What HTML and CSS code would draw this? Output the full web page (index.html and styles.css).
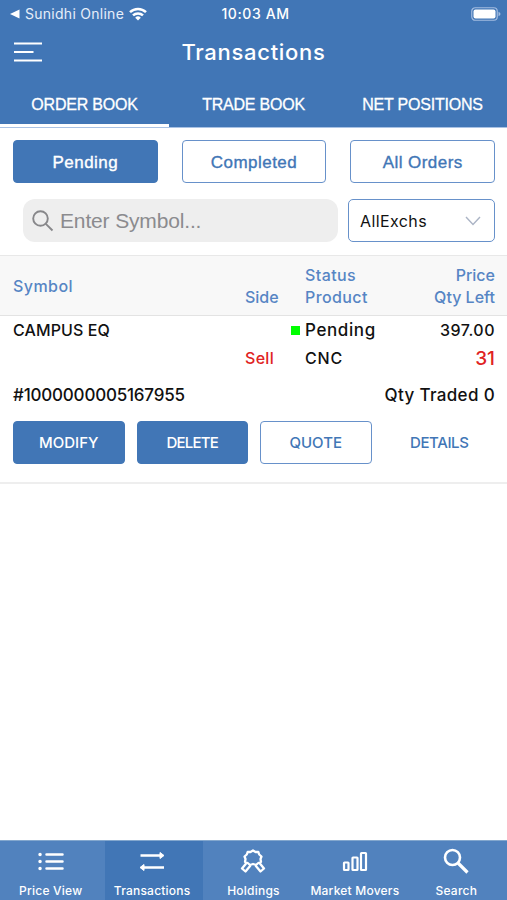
FILE: index.html
```html
<!DOCTYPE html>
<html lang="en">
<head>
    <meta charset="UTF-8">
    <title>Transactions</title>
    <link rel="stylesheet" href="styles.css">
</head>
<body>
    <div class="app">
        <header class="top">
            <div class="status-bar">
                <div class="status-left">
                    <svg width="10" height="10" viewBox="0 0 10 10"><path d="M0 5L9.500 .5V9.500Z" fill="#fff"/></svg>
                    <span class="back-app">Sunidhi Online</span>
                    <svg width="18" height="14" viewBox="0 0 18 14" fill="none" stroke="#fff" stroke-width="2.500">
                        <path d="M1 5.200A11.500 11.500 0 0 1 17 5.200M4 8.400A7.200 7.200 0 0 1 14 8.400"/>
                        <path d="M9 13.500L6.200 10.700A4 4 0 0 1 11.800 10.700Z" fill="#fff" stroke="none"/>
                    </svg>
                </div>
                <span class="clock">10:03 AM</span>
                <svg class="battery" width="30" height="14" viewBox="0 0 30 14">
                    <rect x=".75" y=".75" width="25.500" height="12.500" rx="3.500" fill="none" stroke="#a3bce0" stroke-width="1.200"/>
                    <rect x="2.500" y="2.500" width="22" height="9" rx="2" fill="#fff"/>
                    <path d="M27.500 4.800Q29.500 5.500 29.500 7T27.500 9.200Z" fill="#a3bce0"/>
                </svg>
            </div>
            <div class="title-bar">
                <svg width="28" height="20" viewBox="0 0 28 20" stroke="#fff" stroke-width="2"><path d="M0 1.500H28M0 10H19.500M0 18.500H28"/></svg>
                <h1>Transactions</h1>
            </div>
            <nav class="tabs">
                <a class="tab selected">ORDER BOOK</a>
                <a class="tab">TRADE BOOK</a>
                <a class="tab">NET POSITIONS</a>
            </nav>
        </header>

        <section class="filters">
            <div class="filter-row">
                <button class="btn filled">Pending</button>
                <button class="btn">Completed</button>
                <button class="btn">All Orders</button>
            </div>
            <div class="search-row">
                <div class="search-box">
                    <svg width="22" height="22" viewBox="0 0 22 22" fill="none" stroke="#87878a" stroke-width="1.900"><circle cx="8.500" cy="8.500" r="7.300"/><path d="M13.800 13.800L20.500 20.500"/></svg>
                    <span>Enter Symbol...</span>
                </div>
                <div class="exchange">
                    <span>AllExchs</span>
                    <svg width="16" height="10" viewBox="0 0 16 10" fill="none" stroke="#abb4c5" stroke-width="1.400"><path d="M1 1L8 8.500L15 1"/></svg>
                </div>
            </div>
        </section>

        <div class="list-head">
            <span class="head-symbol">Symbol</span>
            <span class="head-side">Side</span>
            <div class="head-status"><div>Status</div><div>Product</div></div>
            <div class="head-price"><div>Price</div><div>Qty Left</div></div>
        </div>

        <section class="order">
            <div class="order-row">
                <span class="symbol">CAMPUS EQ</span>
                <i class="dot"></i>
                <span class="state">Pending</span>
                <span class="price">397.00</span>
            </div>
            <div class="order-row">
                <span class="side">Sell</span>
                <span class="product">CNC</span>
                <span class="qty">31</span>
            </div>
            <div class="order-info">
                <span class="order-id">#1000000005167955</span>
                <span class="traded">Qty Traded 0</span>
            </div>
            <div class="actions">
                <button class="btn filled">MODIFY</button>
                <button class="btn filled delete">DELETE</button>
                <button class="btn">QUOTE</button>
                <button class="btn plain">DETAILS</button>
            </div>
        </section>

        <nav class="bottom-nav">
            <a class="nav-item">
                <svg width="28" height="26" viewBox="0 0 28 26" fill="none" stroke="#fff" stroke-width="2.500" stroke-linecap="round"><path d="M9.500 6.500H25.500M9.500 13.500H25.500M9.500 20.500H25.500"/><path d="M3 6.500H3.100M3 13.500H3.100M3 20.500H3.100" stroke-width="3.400"/></svg>
                <span>Price View</span>
            </a>
            <a class="nav-item current">
                <svg width="28" height="26" viewBox="0 0 28 26" fill="#fff" stroke="#fff"><path d="M2.500 7.500H22M26 19.500H6" fill="none" stroke-width="2.400"/><path d="M22 4.500L26 7.500L22 10.500ZM6 16.500L2 19.500L6 22.500Z"/></svg>
                <span>Transactions</span>
            </a>
            <a class="nav-item">
                <svg width="28" height="26" viewBox="0 0 28 26" fill="none" stroke="#fff" stroke-width="2.300" stroke-linejoin="round"><path d="M14 2.500L16.500 4L19.300 3.800L20.200 6.500L22.500 8.500L21.500 11L22 14L19.300 15L17 17L14 16L11 17L8.700 15L6 14L6.500 11L5.500 8.500L7.800 6.500L8.700 3.800L11.500 4Z"/><path d="M7.500 15L3 20.500L6.500 23.500L11.500 17.500M20.500 15L25 20.500L21.500 23.500L16.500 17.500"/></svg>
                <span>Holdings</span>
            </a>
            <a class="nav-item">
                <svg width="28" height="26" viewBox="0 0 28 26" fill="none" stroke="#fff" stroke-width="2.200"><rect x="3" y="14.500" width="4.500" height="7.500" rx=".5"/><rect x="11.500" y="9.500" width="5" height="12.500" rx=".5"/><rect x="20" y="5" width="5" height="17" rx=".5"/></svg>
                <span>Market Movers</span>
            </a>
            <a class="nav-item">
                <svg width="28" height="26" viewBox="0 0 28 26" fill="none" stroke="#fff" stroke-width="2.600"><circle cx="10.500" cy="9.500" r="7.500"/><path d="M15.500 14.500L25.500 24.500" stroke-width="3.200"/></svg>
                <span>Search</span>
            </a>
        </nav>
    </div>
</body>
</html>
```

FILE: styles.css
```css
* {
    box-sizing: border-box;
}

body {
    margin: 0;
    font-family: Inter, "Liberation Sans", sans-serif;
    background-color: #fff;
    color: #111;
}

.app {
    display: flex;
    flex-direction: column;
    height: 900px;
    width: 507px;
}

svg {
    display: block;
    flex: none;
}

.top {
    height: 128px;
    background-color: #4176b6;
    border-bottom: 1px solid #a9c2e4;
    color: #fff;
}

.status-bar {
    display: grid;
    grid-template-columns: 1fr auto 1fr;
    align-items: center;
    height: 27px;
    padding: 0 6px 0 10px;
}

.status-left {
    display: flex;
    align-items: center;
}

.back-app {
    margin: 0 5px 0 5px;
    font-size: 14px;
    letter-spacing: 0.27px;
    color: #e6eefa;
    white-space: nowrap;
}

.clock {
    font-size: 14px;
    font-weight: 500;
    letter-spacing: 0.6px;
}

.battery {
    justify-self: end;
}

.title-bar {
    display: grid;
    grid-template-columns: 1fr auto 1fr;
    align-items: center;
    height: 50px;
    padding: 0 14px;
}

h1 {
    margin: 0;
    font-size: 22px;
    font-weight: 500;
    letter-spacing: 0.7px;
}

.tabs {
    display: grid;
    grid-template-columns: repeat(3, 1fr);
    height: 50px;
}

.tab {
    display: flex;
    align-items: center;
    justify-content: center;
    padding-top: 9px;
    border-bottom: 3px solid transparent;
    font-family: "Liberation Sans", sans-serif;
    font-size: 16px;
    letter-spacing: -0.22px;
    -webkit-text-stroke: 0.3px #fff;
}

.tab.selected {
    border-color: #fff;
}

.filters {
    height: 128px;
    padding: 12px 12px 0 13px;
    border-bottom: 1px solid #e8e8e8;
}

.filter-row {
    display: grid;
    grid-template-columns: repeat(3, 1fr);
    gap: 24px;
}

.btn {
    height: 43px;
    padding: 0;
    border: 1px solid #6791ca;
    border-radius: 4px;
    background-color: #fff;
    color: #4176b6;
    font-family: inherit;
    font-size: 15px;
    font-weight: 500;
}

.filter-row .btn {
    padding-top: 2px;
    font-family: "Liberation Sans", sans-serif;
    font-size: 17px;
    letter-spacing: 0.45px;
    -webkit-text-stroke: 0.35px currentColor;
}

.btn.filled {
    background-color: #4176b6;
    border-color: #4176b6;
    color: #fff;
}

.btn.plain {
    border-color: transparent;
    letter-spacing: -0.4px;
}

.btn.delete {
    letter-spacing: -0.8px;
}

.search-row {
    display: flex;
    gap: 10px;
    margin-top: 16px;
    padding-left: 10px;
}

.search-box {
    display: flex;
    align-items: center;
    gap: 6px;
    flex: 1;
    height: 43px;
    padding-left: 9px;
    border-radius: 12px;
    background-color: #eee;
    color: #8b8b8e;
    font-family: "Liberation Sans", sans-serif;
    font-size: 21px;
    letter-spacing: -0.15px;
}

.exchange {
    display: flex;
    align-items: center;
    justify-content: space-between;
    width: 147px;
    height: 43px;
    padding: 0 13px 0 11px;
    border: 1px solid #6791ca;
    border-radius: 5px;
    font-size: 16px;
    letter-spacing: 0.4px;
}

.list-head {
    display: grid;
    grid-template-columns: 232px 60px 1fr 1fr;
    height: 60px;
    padding: 8px 12px 0 13px;
    border-bottom: 1px solid #e3e3e3;
    background-color: #f8f8f8;
    color: #5685c4;
    font-size: 16px;
    font-weight: 500;
    line-height: 22px;
}

.head-symbol {
    padding-top: 11px;
    letter-spacing: 0.45px;
}

.head-side {
    padding-top: 22px;
}

.head-status {
    letter-spacing: 0.4px;
}

.head-price {
    text-align: right;
}

.order {
    height: 168px;
    padding: 0 12px 0 13px;
    border-bottom: 2px solid #eee;
    font-size: 16px;
    font-weight: 500;
}

.order-row {
    display: grid;
    grid-template-columns: 278px 14px 1fr 1fr;
    align-items: center;
    height: 28px;
}

.symbol {
    letter-spacing: 0.1px;
}

.dot {
    width: 9px;
    height: 9px;
    background-color: #0f0;
}

.state {
    font-size: 17px;
    letter-spacing: 0.6px;
}

.price,
.qty {
    text-align: right;
}

.price {
    letter-spacing: 0.5px;
}

.side {
    padding-left: 232px;
    letter-spacing: 0.3px;
    color: #e02222;
}

.product {
    grid-column: 3;
    letter-spacing: 0.8px;
}

.qty {
    color: #e02222;
    font-size: 19px;
}

.order-info {
    display: flex;
    align-items: center;
    justify-content: space-between;
    height: 49px;
    padding-bottom: 4px;
    font-size: 17px;
}

.order-id {
    letter-spacing: -0.2px;
}

.traded {
    letter-spacing: 0.35px;
}

.actions {
    display: grid;
    grid-template-columns: repeat(4, 1fr);
    gap: 12px;
}

.bottom-nav {
    display: grid;
    grid-template-columns: repeat(5, 1fr);
    height: 60px;
    margin-top: auto;
    background-color: #5182be;
    border-top: 1px solid #83a7ce;
    color: #fff;
}

.nav-item {
    display: flex;
    flex-direction: column;
    align-items: center;
    gap: 9px;
    padding-top: 7px;
    font-size: 12px;
    font-weight: 500;
    letter-spacing: 0.22px;
    white-space: nowrap;
}

.nav-item.current {
    background: linear-gradient(90deg, transparent 4px, #4176b6 4px);
}
```
